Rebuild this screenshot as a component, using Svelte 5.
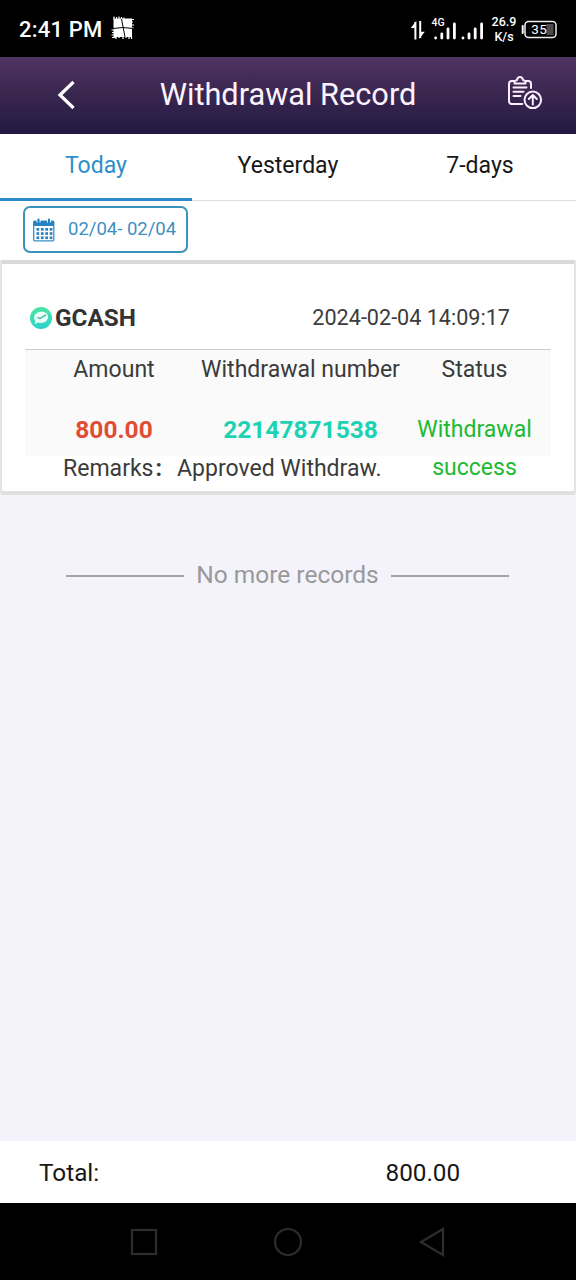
<script>
  const tabs = ['Today', 'Yesterday', '7-days'];
  let active = $state(0);
  const record = {
    method: 'GCASH',
    time: '2024-02-04 14:09:17',
    amount: '800.00',
    number: '22147871538',
    status: 'Withdrawal success',
    remarks: 'Approved Withdraw.'
  };
  const dots = [0, 1, 2, 3].flatMap((c) => [0, 1, 2].map((r) => [3.5 + c * 4.4, 10 + r * 4.2]));
</script>

<div class="screen">
  <div class="status-bar">
    <span class="clock">2:41 PM</span>
    <svg class="note" width="24" height="24" viewBox="0 0 24 24">
      <path d="M2.500 2.500h18.500v18.500H2.500z" fill="#fff" />
      <path d="M3 .5v3M5.500 1v3M8 .5v3M10.500 1v3M13 1.500v2M5 20v3M8 20v2M12 20v3M15 20v2M18 20v3M20.500 20v3M.5 14h3M1 16.500h3M.5 19h3M1 21.500h4M19 3.500h4M19 6h3M19 9h4M20 12h2.500" stroke="#fff" stroke-width="1.200" />
      <path d="M10.500 3l3.500 18M2 12.500l10-1 10 1" stroke="#000" stroke-width="1" fill="none" />
    </svg>
    <div class="system">
      <svg width="76" height="28" viewBox="0 0 76 28">
        <path d="M5.400 23.500V6M10.200 5v17" fill="none" stroke="#fff" stroke-width="2" />
        <path d="M6.400 4.800L.8 12h4zM9.200 23l5.600-7.200h-4z" fill="#fff" />
        <text x="21.500" y="10" class="tiny">4G</text>
        <g stroke="#fff" stroke-width="2.800" stroke-linecap="round">
          <path d="M25.600 21.800v.2M31.800 18v4M38 13v9M44.400 8v14M53 21.800v.2M59 18v4M65.200 13v9M71.600 8v14" />
        </g>
      </svg>
      <div class="speed"><span>26.9</span><span>K/s</span></div>
      <svg width="37" height="20" viewBox="0 0 37 20">
        <rect x="4" y="1.500" width="31" height="16" rx="3.500" fill="none" stroke="#eee" stroke-width="1.500" />
        <path d="M25.500 4h7v11h-7z" fill="#4b4b4b" />
        <path d="M1.700 6v7" stroke="#fff" stroke-width="2" stroke-linecap="round" />
        <text x="18.300" y="14.200" text-anchor="middle" class="level">35</text>
      </svg>
    </div>
  </div>

  <header>
    <svg class="back" width="20" height="30" viewBox="0 0 20 30"><path d="M17.500 2L4 15l13.500 13" fill="none" stroke="#fff" stroke-width="3.200" /></svg>
    <h1>Withdrawal Record</h1>
    <svg class="report" width="36" height="36" viewBox="0 0 36 36" fill="none" stroke="#fbeeff" stroke-width="2" stroke-linecap="round" stroke-linejoin="round">
      <path d="M7.500 6H4.800Q2 6 2 9v17.300Q2 29 4.800 29h10.500M18.500 6h2.700Q24 6 24 9v4" />
      <path d="M7.500 8.500V6.200l2.600-1.400Q10.500 2 13 2t2.900 2.800l2.600 1.400v2.300z" />
      <path d="M6.500 12.500h13M6.500 16.800h10M6.500 21h7" />
      <circle cx="25.800" cy="24.800" r="8.300" />
      <path d="M25.800 29.500v-9M21.800 24l4-4 4 4" />
    </svg>
  </header>

  <nav>
    {#each tabs as tab, i}
      <button class:active={active === i} onclick={() => (active = i)}>{tab}</button>
    {/each}
  </nav>

  <div class="filter">
    <div class="range">
      <svg width="22" height="24" viewBox="0 0 22 24">
        <rect x=".7" y="3.200" width="20.100" height="19.600" rx="1" fill="#fff" stroke="#3a8fc8" stroke-width="1.300" />
        <path d="M.5 3h20.500v5H.5z" fill="#2583c4" />
        <path d="M5.500 1v3.500M16 1v3.500" stroke="#fff" stroke-width="4" />
        <path d="M5.500 1.500v3M16 1.500v3" stroke="#2583c4" stroke-width="2.200" stroke-linecap="round" />
        {#each dots as [x, y]}
          <rect {x} {y} width="2.700" height="2.700" fill="#2583c4" />
        {/each}
      </svg>
      <span>02/04- 02/04</span>
    </div>
  </div>

  <main>
    <article>
      <div class="top">
        <svg width="24" height="24" viewBox="0 0 24 24">
          <defs><linearGradient id="mint" x2="0" y2="1"><stop stop-color="#4be6a4" /><stop offset="1" stop-color="#2bd3ca" /></linearGradient></defs>
          <circle cx="12" cy="12" r="11" fill="url(#mint)" />
          <path d="M12.500 5.800c4 0 6.500 2 6.500 5.200s-3 6-7 6c-1 0-2-.1-2.700-.4L5.500 18l1-3C5.600 14 5 13 5 11.700c0-3.500 3.300-5.900 7.500-5.900z" fill="#eafff8" />
          <path d="M8.500 11.300l2.500 1.200 6-3.700" fill="none" stroke="#45b9a5" stroke-width="1.400" />
        </svg>
        <strong>{record.method}</strong>
        <time>{record.time}</time>
      </div>
      <div class="table">
        <div class="cell"><span>Amount</span><b class="amount">{record.amount}</b></div>
        <div class="cell"><span>Withdrawal number</span><b class="number">{record.number}</b></div>
        <div class="cell"><span>Status</span><span class="state">{record.status}</span></div>
      </div>
      <p class="remarks"><span>Remarks</span><b class="colon">:</b><span>{record.remarks}</span></p>
    </article>
    <div class="end"><i></i><span>No more records</span><i></i></div>
  </main>

  <footer><span>Total:</span><span>{record.amount}</span></footer>

  <div class="android">
    <svg width="28" height="30" viewBox="0 0 28 30"><rect x="2" y="3" width="24" height="24" /></svg>
    <svg width="30" height="30" viewBox="0 0 30 30"><circle cx="15" cy="15" r="13" /></svg>
    <svg width="28" height="30" viewBox="0 0 28 30"><path d="M25 2v26L3 15z" /></svg>
  </div>
</div>

<style>
  :global(body) { margin: 0; }
  .screen { width: 576px; height: 1280px; display: flex; flex-direction: column; overflow: hidden; background: #f4f3fc; font-family: Roboto, sans-serif; font-size: 23.04px; color: #3b3b3b; }
  .screen :global(*) { box-sizing: border-box; }
  svg { display: block; flex: none; }
  .status-bar { height: 57px; flex: none; background: #000; color: #fff; display: flex; align-items: center; padding: 2px 18px 0 19px; }
  .clock { font-size: 22px; font-weight: 500; letter-spacing: .2px; margin-right: 9px; }
  .note { margin-top: -3px; }
  .system { margin-left: auto; display: flex; align-items: center; }
  .tiny { font: 500 10.500px Roboto, sans-serif; fill: #fff; }
  .speed { width: 26px; margin: -1px 4px 0 5px; font-size: 12.500px; font-weight: 500; line-height: 15px; display: flex; flex-direction: column; align-items: center; }
  .level { font: 13.500px Roboto, sans-serif; fill: #fff; letter-spacing: .5px; }
  header { height: 77px; flex: none; display: flex; align-items: center; padding: 0 33px 2px 56px; background: linear-gradient(#4f3362, #3a2750 48%, #221942); color: #fdf3ff; }
  h1 { flex: 1; margin: 0; text-align: center; font-size: 30.720px; font-weight: 400; line-height: 36px; padding-right: 7px; }
  .report { margin-top: -4px; }
  nav { height: 67px; flex: none; display: grid; grid-template-columns: repeat(3, 1fr); background: #fff; }
  nav button { appearance: none; border: 0; border-bottom: 1px solid #ddd; background: none; font: inherit; color: #171717; padding: 0 0 3px; margin: 0; }
  nav .active { color: #2d8fca; border-bottom: 3px solid #2d8aca; padding-bottom: 1px; }
  .filter { height: 59px; flex: none; background: #fff; padding: 5px 23px; }
  .range { width: 165px; height: 47px; border: 2px solid #3993bd; border-radius: 7px; display: flex; align-items: center; padding: 0 8px; gap: 13px; color: #3f8fc0; font-size: 18.500px; }
  .range span { white-space: nowrap; margin-top: -1px; }
  main { flex: 1; display: flex; flex-direction: column; }
  article { height: 235px; border-style: solid; border-width: 4px 2px 4px; border-color: #dadada #e4e4e4 #e0e0e0; border-radius: 3px; background: #fff; padding: 0 23px; }
  .top { height: 86px; display: flex; align-items: center; padding: 21px 41px 0 4px; border-bottom: 1px solid #ccc; }
  .top svg { margin-top: 1px; }
  strong { font-size: 24.300px; font-weight: 700; margin-left: 2px; color: #333; }
  time { margin-left: auto; font-size: 21.600px; }
  .table { height: 106px; background: #fafafa; display: grid; grid-template-columns: 178px 195px 153px; text-align: center; }
  .cell { display: flex; flex-direction: column; align-items: center; line-height: 38px; white-space: nowrap; padding-top: 1px; }
  .cell > :last-child { margin-top: 22px; }
  .cell b { font-size: 24.500px; }
  .amount { color: #e14d34; }
  .number { color: #1bd3b2; }
  .cell .state { width: 130px; white-space: normal; color: #22b932; font-size: 23.040px; }
  .remarks { margin: 0; padding-left: 38px; line-height: 25px; display: flex; }
  .colon { width: 23.500px; padding-left: 2px; }
  .end { display: flex; align-items: center; justify-content: center; gap: 12px; margin: 64px 1px 0 0; font-size: 24.500px; line-height: 32px; color: #999; }
  .end i { width: 118px; height: 2px; background: #a3a2a8; margin-top: 2px; }
  footer { height: 62px; flex: none; background: #fff; display: flex; align-items: center; color: #171717; font-size: 24.300px; padding: 1px 0 0 39px; }
  footer span { width: 346.500px; }
  footer span:last-child { width: auto; }
  .android { height: 77px; flex: none; background: #000; display: grid; grid-template-columns: repeat(3, 144px); justify-content: center; align-items: center; justify-items: center; fill: none; stroke: #2d2d2d; stroke-width: 2.200; }
</style>
